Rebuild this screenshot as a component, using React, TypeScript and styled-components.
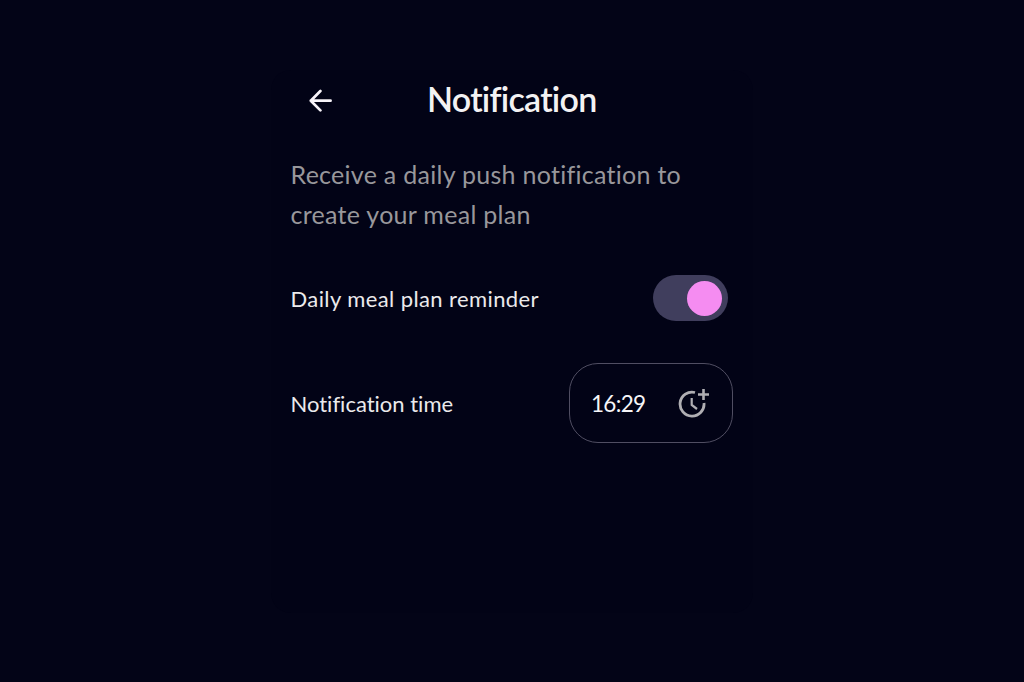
import React, { useState } from 'react';
import styled, { createGlobalStyle } from 'styled-components';

const GlobalStyle = createGlobalStyle`
    * {
        box-sizing: border-box;
    }

    body {
        margin: 0;
        background-color: #030417;
        font-family: Lato, 'Liberation Sans', sans-serif;
        font-variant-ligatures: none;
    }
`;

export default function App() {
    const [isEnabled, setIsEnabled] = useState(true);

    return (
        <Page>
            <GlobalStyle />
            <Screen>
                <Header>
                    <BackButton aria-label="Back">
                        <BackIcon />
                    </BackButton>
                    <Title>Notification</Title>
                </Header>
                <Description>Receive a daily push notification to create your meal plan</Description>
                <Row $height={46}>
                    <Label $spacing={0.4}>Daily meal plan reminder</Label>
                    <Toggle
                        role="switch"
                        aria-checked={isEnabled}
                        aria-label="Daily meal plan reminder"
                        $isOn={isEnabled}
                        onClick={() => setIsEnabled(!isEnabled)}
                    >
                        <Knob />
                    </Toggle>
                </Row>
                <Row $height={80}>
                    <Label $spacing={0}>Notification time</Label>
                    <TimeButton>
                        16:29
                        <ClockIcon />
                    </TimeButton>
                </Row>
            </Screen>
        </Page>
    );
}

function BackIcon() {
    return (
        <svg
            width="24"
            height="24"
            viewBox="0 0 24 24"
            fill="none"
            stroke="#f7f3f8"
            strokeWidth="2.7"
            strokeLinecap="round"
            strokeLinejoin="round"
        >
            <path d="M21.6 12.7H1.8M11.4 3L1.8 12.7L11.4 22.4" />
        </svg>
    );
}

function ClockIcon() {
    return (
        <svg width="32" height="30" viewBox="0 0 32 30" fill="none" stroke="#b0afb3">
            <path d="M17 4.5A12 12 0 1 0 26 15" strokeWidth="2.8" />
            <path d="M13.7 10V17L19 21" strokeWidth="2.2" />
            <path d="M25.5 1V12M20 6.5H31" strokeWidth="2.6" />
        </svg>
    );
}

const Page = styled.main`
    display: flex;
    justify-content: center;
    height: 682px;
    padding-top: 70px;
`;

const Screen = styled.section`
    width: 482px;
    height: 543px;
    padding: 0 20px 0 19.5px;
    border-radius: 20px;
    background-color: #020316;
`;

const Header = styled.header`
    display: grid;
    grid-template-columns: 60px 1fr 60px;
    align-items: center;
    height: 60px;
`;

const BackButton = styled.button`
    display: flex;
    justify-content: center;
    padding: 0;
    border: 0;
    background: none;
    cursor: pointer;
`;

const Title = styled.h1`
    margin: -3px 0 0;
    color: #f3f2f3;
    font-size: 34px;
    font-weight: 600;
    letter-spacing: -0.75px;
    text-align: center;
    white-space: nowrap;
`;

const Description = styled.p`
    width: 420px;
    margin: 24px 0 41px;
    color: #98979b;
    font-size: 25px;
    letter-spacing: 0.28px;
    line-height: 40px;
`;

const Row = styled.div<{ $height: number }>`
    display: flex;
    align-items: center;
    justify-content: space-between;
    height: ${(props) => props.$height}px;
    margin-bottom: 42px;
`;

const Label = styled.span<{ $spacing: number }>`
    color: #ebeaec;
    font-size: 22px;
    letter-spacing: ${(props) => props.$spacing}px;
    white-space: nowrap;
`;

const Toggle = styled.button<{ $isOn: boolean }>`
    display: flex;
    align-items: center;
    justify-content: ${(props) => (props.$isOn ? 'flex-end' : 'flex-start')};
    width: 75px;
    height: 46px;
    margin-right: 5px;
    padding: 0 6px;
    border: 0;
    border-radius: 23px;
    background-color: #403e5d;
    cursor: pointer;
`;

const Knob = styled.span`
    width: 35px;
    height: 35px;
    border-radius: 50%;
    background-color: #f58cf1;
`;

const TimeButton = styled.button`
    display: flex;
    align-items: center;
    justify-content: space-between;
    width: 164px;
    height: 80px;
    padding: 0 22px 0 21px;
    border: 1px solid #504e62;
    border-radius: 29px;
    background: none;
    color: #f7f6f8;
    font-family: inherit;
    font-size: 22.5px;
    letter-spacing: -0.7px;
    cursor: pointer;
`;
